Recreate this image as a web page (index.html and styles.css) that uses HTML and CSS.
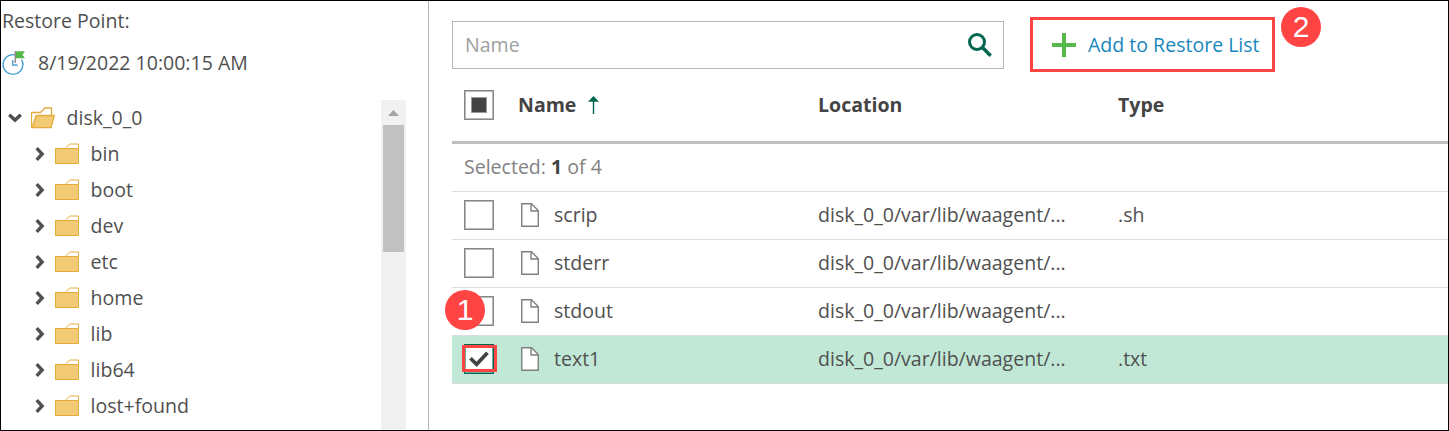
FILE: index.html
```html
<!DOCTYPE html>
<html lang="en">
<head>
<meta charset="utf-8">
<title>Restore</title>
<link rel="stylesheet" href="styles.css">
</head>
<body>
<svg class="defs" aria-hidden="true">
  <symbol id="folder" viewBox="0 0 24 22"><path d="M10.5 5 15 1H23.5V5" fill="#fff" stroke="#e2ab3c"/><path d="M.5 5.5H23.5V20.5H.5Z" fill="#f2c975" stroke="#e2ab3c"/></symbol>
  <symbol id="open" viewBox="0 0 24 22"><path d="M.5 20.5V5.5H9.5L14 1H20.5V8" fill="#fff" stroke="#e2ab3c" stroke-width="1.3"/><path d="M5.2 8.5H23.3L20 20.7H1Z" fill="#f2c975" stroke="#e2ab3c" stroke-width="1.3"/></symbol>
  <symbol id="chev" viewBox="0 0 10 16"><path d="M1.7 2.2 7.1 8 1.7 13.8" fill="none" stroke="#505050" stroke-width="3.4"/></symbol>
  <symbol id="file" viewBox="0 0 18 24"><path d="M.75.75H10.5L17.25 7.5V23.25H.75Z" fill="#fff" stroke="#808080" stroke-width="1.4"/><path d="M10 .75V8H17.25" fill="none" stroke="#808080" stroke-width="1.4"/></symbol>
</svg>
<div class="frame">
  <aside class="side">
    <div class="label">Restore Point:</div>
    <div class="point">
      <svg width="23" height="25" viewBox="0 0 23 25"><circle cx="11" cy="13.5" r="9.9" fill="none" stroke="#4aa0d0" stroke-width="1.4"/><path d="M13 0H23V12H13Z" fill="#fff"/><path d="M10.7 9V14H15.5" fill="none" stroke="#4aa0d0" stroke-width="1.4"/><path d="M13.2 0V12" stroke="#777" stroke-width="1.2"/><path d="M14 .2H23L20.5 3.8 23 7.3H14Z" fill="#54b948"/><path d="M20.9 13.5A9.9 9.9 0 0 0 19.5 8.7" fill="none" stroke="#4aa0d0" stroke-width="1.4"/></svg>
      <span>8/19/2022 10:00:15 AM</span>
    </div>
    <div class="treebox">
      <ul class="tree">
        <li class="root"><svg class="chev down"><use href="#chev"/></svg><svg class="fold"><use href="#open"/></svg>disk_0_0</li>
        <li><svg class="chev"><use href="#chev"/></svg><svg class="fold"><use href="#folder"/></svg>bin</li>
        <li><svg class="chev"><use href="#chev"/></svg><svg class="fold"><use href="#folder"/></svg>boot</li>
        <li><svg class="chev"><use href="#chev"/></svg><svg class="fold"><use href="#folder"/></svg>dev</li>
        <li><svg class="chev"><use href="#chev"/></svg><svg class="fold"><use href="#folder"/></svg>etc</li>
        <li><svg class="chev"><use href="#chev"/></svg><svg class="fold"><use href="#folder"/></svg>home</li>
        <li><svg class="chev"><use href="#chev"/></svg><svg class="fold"><use href="#folder"/></svg>lib</li>
        <li><svg class="chev"><use href="#chev"/></svg><svg class="fold"><use href="#folder"/></svg>lib64</li>
        <li><svg class="chev"><use href="#chev"/></svg><svg class="fold"><use href="#folder"/></svg>lost+found</li>
      </ul>
      <div class="scroll"><svg width="11" height="6" viewBox="0 0 11 6"><path d="M0 6 5.5 0 11 6Z" fill="#a3a3a3"/></svg><div class="thumb"></div></div>
    </div>
  </aside>
  <main class="main">
    <div class="bar">
      <div class="search"><span>Name</span><svg width="24" height="24" viewBox="0 0 24 24" fill="none" stroke="#00664f"><circle cx="9" cy="9" r="7.5" stroke-width="3"/><path d="M14.5 14.5 22.7 22.7" stroke-width="3.5"/></svg></div>
      <div class="add"><svg width="24" height="24" viewBox="0 0 24 24"><path d="M12 0V24M0 12H24" stroke="#54b948" stroke-width="4"/></svg><span>Add to Restore List</span><b class="badge two">2</b></div>
    </div>
    <div class="row head"><i class="check part"></i><span class="name">Name<svg width="11" height="18" viewBox="0 0 11 18"><path d="M5.5 3V18" stroke="#00664f" stroke-width="1.4"/><path d="M0 5.7 5.5 0 11 5.7Z" fill="#00664f"/></svg></span><span class="loc">Location</span><span>Type</span></div>
    <div class="row count"><span>Selected: <b>1</b> of 4</span></div>
    <div class="row"><i class="check"></i><span class="name"><svg class="file"><use href="#file"/></svg>scrip</span><span class="loc">disk_0_0/var/lib/waagent/...</span><span>.sh</span></div>
    <div class="row"><i class="check"></i><span class="name"><svg class="file"><use href="#file"/></svg>stderr</span><span class="loc">disk_0_0/var/lib/waagent/...</span></div>
    <div class="row"><i class="check"><b class="badge one">1</b></i><span class="name"><svg class="file"><use href="#file"/></svg>stdout</span><span class="loc">disk_0_0/var/lib/waagent/...</span></div>
    <div class="row selected"><i class="check on"><svg width="20" height="16" viewBox="0 0 20 16"><path d="M1.4 7.2 7.6 13.3 18.5 1.7" fill="none" stroke="#444" stroke-width="3.7"/></svg><em class="mark"></em></i><span class="name"><svg class="file"><use href="#file"/></svg>text1</span><span class="loc">disk_0_0/var/lib/waagent/...</span><span>.txt</span></div>
  </main>
</div>
</body>
</html>
```
FILE: styles.css
```css
*, *::after { box-sizing: border-box; }
body { margin: 0; background: #fff; color: #505050; font: 19.54px/28px "Open Sans", sans-serif; }
svg { display: block; flex: none; }
.defs { position: absolute; width: 0; height: 0; }
.frame { display: flex; width: 1449px; height: 431px; border: 1px solid #000; overflow: hidden; white-space: nowrap; }
.side { width: 428px; flex: none; border-right: 1px solid #b5b5b5; display: flex; flex-direction: column; }
.label { padding: 6px 0 0 1px; height: 35px; }
.point { display: flex; align-items: center; height: 56px; gap: 13px; padding-left: 1px; }
.point svg { margin-bottom: 1px; }
.point span { padding-bottom: 2px; }
.treebox { display: flex; justify-content: space-between; flex: 1; min-height: 0; margin-top: 8px; padding-right: 22px; }
.tree { list-style: none; margin: 0; padding: 0; }
.tree li { display: flex; align-items: center; height: 36px; padding-left: 34px; }
.tree .root { padding-left: 9px; }
.chev { width: 10px; height: 16px; }
.chev.down { transform: rotate(90deg); margin-right: 3px; }
.fold { width: 24px; height: 22px; margin: 0 11.6px 0 10px; }
.root .fold { margin-left: 8px; }
.scroll { width: 25px; height: 332px; background: #f1f1f1; display: flex; flex-direction: column; align-items: center; padding-top: 10px; }
.thumb { width: 21px; height: 127px; background: #c1c1c1; margin-top: 9px; }
.main { flex: 1; padding: 15px 0 0 23px; }
.bar { display: flex; height: 56px; gap: 26px; }
.search { display: flex; justify-content: space-between; width: 552px; height: 48px; margin-top: 5px; border: 1px solid #b8b8b8; align-items: center; padding: 0 11px 0 12px; color: #a0a0a0; }
.add { position: relative; display: flex; align-items: center; width: 245px; height: 55px; margin-top: 1px; border: 3px solid #ff4444; padding-left: 19px; gap: 12px; color: #1787bd; }
.badge { position: absolute; width: 40px; height: 40px; border-radius: 50%; background: #ff4444; color: #fff; font: normal 30px/40px "Liberation Sans", sans-serif; text-align: center; }
.two { left: 248px; top: -13px; }
.one { left: -20px; top: -7px; }
.row { display: flex; align-items: center; height: 48px; padding: 0 0 2px 12px; border-bottom: 1px solid #ddd; }
.head { height: 72px; border-bottom: 3px solid #bfbfbf; font-weight: 700; color: #444; padding-top: 18px; align-items: flex-start; }
.head > span { height: 30px; line-height: 30px; }
.count { color: #828282; }
.count b { color: #444; }
.check { position: relative; width: 30px; height: 30px; flex: none; border: 1px solid #868686; background: #fff; box-shadow: inset 0 0 0 1px #b9b9b9; margin-right: 27px; display: flex; align-items: center; justify-content: center; font-style: normal; }
.head .check { margin-right: 24px; }
.part::after { content: ""; width: 16px; height: 16px; background: #444; border: 1px solid #999; }
.on { border-color: #00664f; box-shadow: inset 0 0 0 1px #70a99c; }
.name { display: flex; align-items: center; width: 297px; }
.head .name { width: 300px; gap: 12px; }
.loc { width: 300px; }
.file { width: 18px; height: 24px; margin-right: 15px; }
.selected { background: #c1e8d6; }
.mark { position: absolute; left: -3px; top: 0; width: 35px; height: 27px; border: 3px solid #ff4444; }
```
